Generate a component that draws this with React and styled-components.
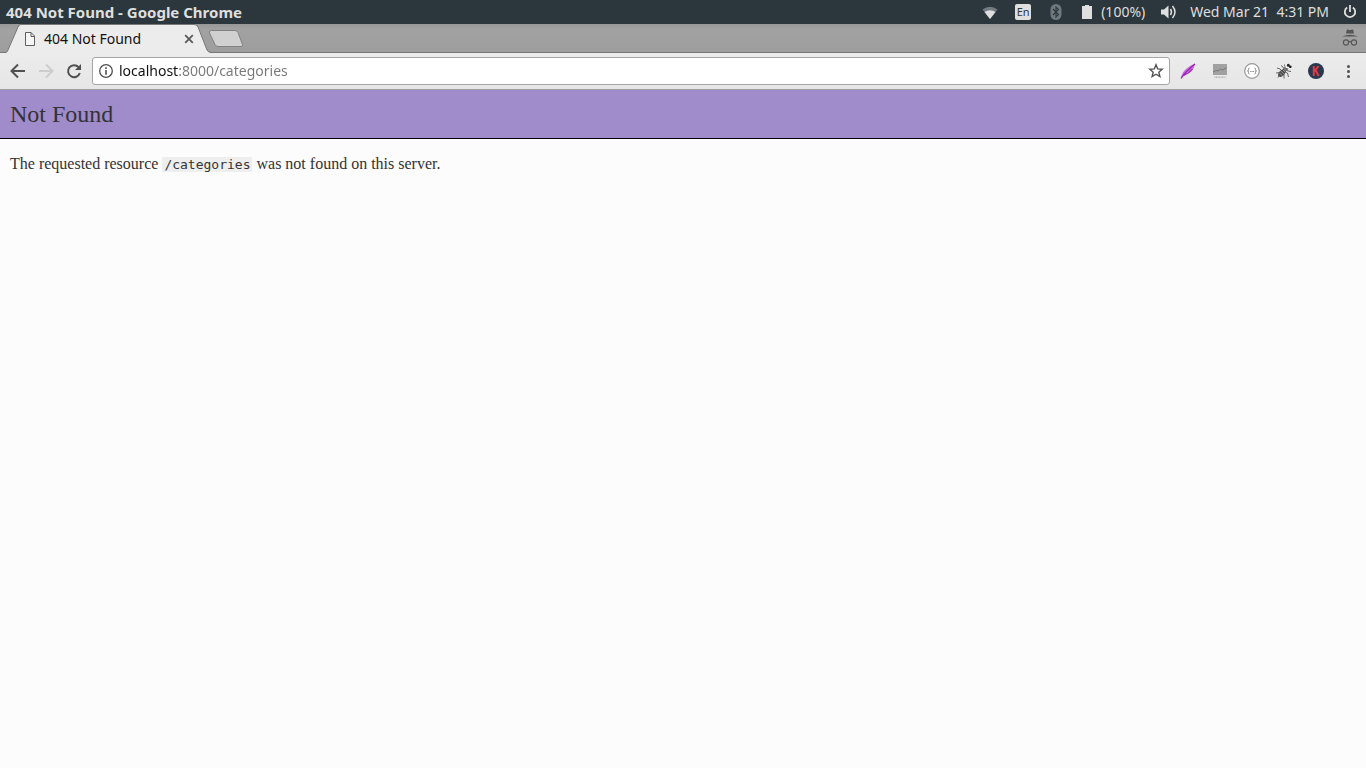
import React from "react";
import styled, { createGlobalStyle } from "styled-components";

const extensions = [
  { label: "Feather", icon: FeatherIcon },
  { label: "Analytics", icon: AnalyticsIcon },
  { label: "JSON", icon: JsonIcon },
  { label: "Debugger", icon: BugIcon },
  { label: "K", icon: KIcon },
];

const App = () => {
  return (
    <Wrapper>
      <GlobalStyle />
      <SystemBar />
      <TabStrip>
        <Tab>
          <TabShape viewBox="0 0 208 29" preserveAspectRatio="none">
            <path d="M0 29 C3 29 3 28 4 26 L14 3 Q15 .5 17 .5 H190 Q193 .5 194 3 L203 26 Q204 28.500 208 29 Z" fill="#ececec" />
            <path d="M0 28.500 C3 28.500 3 28 4 26 L14 3 Q15 .5 17 .5 H190 Q193 .5 194 3 L203 26 Q204 28.500 208 28.500" fill="none" stroke="#777" />
          </TabShape>
          <FileIcon />
          <TabTitle>404 Not Found</TabTitle>
          <TabClose aria-label="Close tab">
            <svg width="10" height="10" viewBox="0 0 10 10" stroke="#5a5a5a" strokeWidth="1.8">
              <path d="M1.200 1.200 8.800 8.800 M8.800 1.200 1.200 8.800" />
            </svg>
          </TabClose>
        </Tab>
        <NewTab aria-label="New tab">
          <svg width="36" height="18" viewBox="0 0 36 18">
            <path d="M3 1.500 H27 Q29 1.500 30 3.500 L34.500 15.500 Q35 17.500 33 17.500 H10 Q8 17.500 7 15.500 L1.500 4 Q.8 1.500 3 1.500Z" fill="#d0d0d0" stroke="#808080" />
          </svg>
        </NewTab>
        <IncognitoIcon />
      </TabStrip>
      <Toolbar />
      <Main>
        <PageHeader>
          <Title>Not Found</Title>
        </PageHeader>
        <Message>
          The requested resource <Code>/categories</Code> was not found on this server.
        </Message>
      </Main>
    </Wrapper>
  );
};

const SystemBar = () => (
  <Bar>
    <WindowTitle>404 Not Found - Google Chrome</WindowTitle>
    <Indicators>
      <StatusIcons>
        <svg width="16" height="16" viewBox="0 0 16 16">
          <path d="M.5 5.500 Q8 0 15.500 5.500 L8 15Z" fill="#727b7f" />
          <path d="M2.500 8 Q8 4.500 13.500 8 L8 15Z" fill="#dfdfdf" />
        </svg>
        <Language>En</Language>
        <svg width="16" height="16" viewBox="0 0 16 16">
          <rect x="2.500" y="0" width="11" height="16" rx="5.500" fill="#6f787c" />
          <path d="M5 5 10.500 10.500 8 13 V3 L10.500 5.500 5 11" fill="none" stroke="#2c373d" strokeWidth="1.100" />
        </svg>
        <Battery>
          <svg width="12" height="16" viewBox="0 0 12 16">
            <path d="M1 2 H4 V1 H8 V2 H11 V15 H1Z" fill="#dfdfdf" />
          </svg>
          <span>(100%)</span>
        </Battery>
      </StatusIcons>
      <svg width="16" height="16" viewBox="0 0 16 16">
        <path d="M1 5.500 H4 L8.500 1.500 V14.500 L4 10.500 H1Z" fill="#dfdfdf" />
        <path d="M10.500 5 Q12.500 8 10.500 11" fill="none" stroke="#dfdfdf" strokeWidth="1.500" />
        <path d="M12.500 2 Q17.500 8 12.500 14" fill="none" stroke="#dfdfdf" strokeWidth="1.500" />
      </svg>
      <Clock>Wed Mar 21{"  "}4:31 PM</Clock>
      <svg width="14" height="14" viewBox="0 0 14 14" fill="none" stroke="#dfdfdf" strokeWidth="1.800">
        <path d="M4.200 2.500 A5.200 5.200 0 1 0 9.800 2.500 M7 0 V7" />
      </svg>
    </Indicators>
  </Bar>
);

const Toolbar = () => (
  <ToolbarRow>
    <Nav>
      <NavButton aria-label="Back">
        <svg width="16" height="16" viewBox="0 0 16 16" fill="none" stroke="#505050" strokeWidth="2">
          <path d="M15 8 H2 M8 1.500 1.500 8 8 14.500" />
        </svg>
      </NavButton>
      <NavButton aria-label="Forward" disabled>
        <svg width="16" height="16" viewBox="0 0 16 16" fill="none" stroke="#cdcdcd" strokeWidth="2">
          <path d="M1 8 H14 M8 1.500 14.500 8 8 14.500" />
        </svg>
      </NavButton>
      <NavButton aria-label="Reload">
        <svg width="16" height="16" viewBox="0 0 16 16" fill="none" stroke="#505050" strokeWidth="2">
          <path d="M12.600 4.200 A6 6 0 1 0 13.800 10" />
          <path d="M15 1 V7 H9Z" fill="#505050" stroke="none" />
        </svg>
      </NavButton>
    </Nav>
    <Omnibox>
      <svg width="14" height="14" viewBox="0 0 14 14">
        <circle cx="7" cy="7" r="6.300" fill="none" stroke="#505050" strokeWidth="1.300" />
        <path d="M6.200 3.300 H7.800 V4.900 H6.200Z M6.200 6 H7.800 V10.800 H6.200Z" fill="#505050" />
      </svg>
      <Url aria-label="Address" defaultValue="localhost:8000/categories" spellCheck="false" />
      <StarButton aria-label="Bookmark this page">
        <svg width="16" height="16" viewBox="0 0 16 16">
          <path d="M8 1.700 9.700 5.900 14.200 6.200 10.800 9.200 11.900 13.600 8 11.200 4.100 13.600 5.200 9.200 1.800 6.200 6.300 5.900Z" fill="none" stroke="#505050" strokeWidth="1.400" />
        </svg>
      </StarButton>
    </Omnibox>
    <Extensions>
      {extensions.map(({ label, icon: Icon }) => (
        <NavButton aria-label={label} key={label}>
          <Icon />
        </NavButton>
      ))}
    </Extensions>
    <NavButton aria-label="Menu">
      <svg width="16" height="16" viewBox="0 0 16 16" fill="#505050">
        <circle cx="8.500" cy="3.500" r="1.500" />
        <circle cx="8.500" cy="8.500" r="1.500" />
        <circle cx="8.500" cy="13.500" r="1.500" />
      </svg>
    </NavButton>
  </ToolbarRow>
);

function FileIcon() {
  return (
    <svg width="12" height="14" viewBox="0 0 12 14" fill="#f6f6f6" stroke="#5f5f5f">
      <path d="M1.500 .5 H7 L10.500 4 V13.500 H1.500Z M7 .5 V4.500 H10.500" />
    </svg>
  );
}

function IncognitoIcon() {
  return (
    <svg width="18" height="18" viewBox="0 0 18 18">
      <path d="M5 4.500 5.800 .8 Q6.200 .3 7 .6 L9 1.200 11 .6 Q11.800 .3 12.200 .8 L13 4.500Z" fill="#555" />
      <path d="M1 7.500 Q9 4 17 7.500Z" fill="#555" />
      <g fill="none" stroke="#555" strokeWidth="1.100">
        <circle cx="5" cy="13.500" r="2.600" />
        <circle cx="13" cy="13.500" r="2.600" />
        <path d="M7.600 13.200 Q9 12 10.400 13.200" />
      </g>
    </svg>
  );
}

function FeatherIcon() {
  return (
    <svg width="16" height="16" viewBox="0 0 16 16">
      <path d="M1 15 Q1.500 10 6 6 Q10 2.500 15 .5 Q14.500 5 11.500 8 Q7 12 3 13Z" fill="#c76fda" />
      <path d="M1 15.500 Q6 8 15 1 M3.500 12.500 Q9 10.500 12.500 6" fill="none" stroke="#9a1cb5" strokeWidth="1.200" />
    </svg>
  );
}

function AnalyticsIcon() {
  return (
    <svg width="16" height="16" viewBox="0 0 16 16">
      <path d="M1 1 H15 V12 H1Z" fill="#a1a1a1" />
      <path d="M1 9 4 7.500 6 8 8.500 6 11 7 14.500 4.500" fill="none" stroke="#777" />
      <path d="M2.500 14.200 H13.500" stroke="#b4b4b4" strokeDasharray="1 .5" strokeWidth="1.500" />
    </svg>
  );
}

function JsonIcon() {
  return (
    <svg width="16" height="16" viewBox="0 0 16 16">
      <circle cx="8" cy="8" r="7.300" fill="#fff" stroke="#999" strokeWidth="1.200" />
      <path d="M5.500 5 Q4.300 5 4.500 6.500 Q4.700 8 3.500 8 Q4.700 8 4.500 9.500 Q4.300 11 5.500 11 M10.500 5 Q11.700 5 11.500 6.500 Q11.300 8 12.500 8 Q11.300 8 11.500 9.500 Q11.700 11 10.500 11" fill="none" stroke="#888" />
      <path d="M6.200 8.500 H10" stroke="#888" strokeDasharray="1 .4" />
    </svg>
  );
}

function BugIcon() {
  return (
    <svg width="16" height="16" viewBox="0 0 16 16">
      <path d="M1 5 4 6 6 8 M5 2.500 7 4 8 6 M0 10 4 9.500 M2 14.500 3.500 11.500 M8 15.500 8 11.500 M12.500 14 11.500 10 8.500 9 M15 8.500 12 8 9.500 7 M8.500 1.500 9.500 4.500" fill="none" stroke="#666" strokeWidth="1" />
      <ellipse cx="6" cy="10" rx="4.600" ry="2.700" transform="rotate(-45 6 10)" fill="#4c4c4c" />
      <path d="M3.300 9.700 6.300 12.700 M4.900 8.100 7.900 11.100 M6.500 6.500 9.500 9.500" stroke="#aaa" strokeWidth=".8" />
      <circle cx="10" cy="5.700" r="2.300" fill="#777" />
      <circle cx="11.500" cy="3" r="2.200" fill="#fff" />
      <circle cx="14" cy="4.500" r="1.600" fill="#fff" />
      <circle cx="12.300" cy="2.200" r="1.500" fill="#222" />
      <circle cx="14.300" cy="3.800" r="1.400" fill="#222" />
    </svg>
  );
}

function KIcon() {
  return (
    <svg width="16" height="16" viewBox="0 0 16 16">
      <circle cx="8" cy="8" r="8" fill="#293950" />
      <path d="M5.800 3 V13 M10.500 3 6.500 8.300 M7.500 7 10.700 13" fill="none" stroke="#e33b44" strokeWidth="2" />
    </svg>
  );
}

const GlobalStyle = createGlobalStyle`
  * {
    box-sizing: border-box;
  }
  body {
    margin: 0;
    background: #fcfcfc;
  }
  svg {
    display: block;
    flex: none;
  }
`;

const Wrapper = styled.div`
  display: flex;
  flex-direction: column;
  min-height: 100vh;
  font-family: "Noto Sans", sans-serif;
`;

const Bar = styled.header`
  display: flex;
  align-items: center;
  justify-content: space-between;
  height: 24px;
  padding: 0 9px 0 6px;
  background: #2c373d;
  color: #dfdfdf;
  font-size: 14px;
  line-height: 24px;
`;

const WindowTitle = styled.strong`
  font-size: 15px;
  font-weight: 700;
  line-height: 22px;
`;

const Indicators = styled.div`
  display: flex;
  align-items: center;
  gap: 14px;
`;

const StatusIcons = styled.div`
  display: flex;
  align-items: center;
  gap: 17px;
  margin-right: 1px;
`;

const Language = styled.span`
  width: 16px;
  height: 16px;
  border-radius: 2px;
  background: #dfdfdf;
  color: #2c373d;
  font-size: 11px;
  line-height: 16px;
  text-align: center;
`;

const Battery = styled.div`
  display: flex;
  align-items: center;
  gap: 8px;
`;

const Clock = styled.time`
  white-space: pre;
`;

const TabStrip = styled.div`
  display: flex;
  align-items: center;
  height: 29px;
  padding: 0 7px 0 4px;
  border-bottom: 1px solid #777;
  background: linear-gradient(#989898, #a2a2a2 6px, #9d9d9d);

  > svg {
    margin-left: auto;
  }
`;

const Tab = styled.div`
  position: relative;
  z-index: 1;
  display: flex;
  align-items: center;
  width: 208px;
  height: 29px;
  margin-bottom: -1px;
  padding: 0 18px 0 20px;
  gap: 8px;

  > svg {
    position: relative;
  }
`;

const TabShape = styled.svg`
  && {
    position: absolute;
    inset: 0;
    width: 100%;
    height: 100%;
  }
`;

const TabTitle = styled.span`
  position: relative;
  flex: 1;
  color: #111;
  font-size: 14px;
  line-height: 20px;
`;

const IconButton = styled.button`
  display: grid;
  place-items: center;
  flex: none;
  padding: 0;
  border: none;
  background: transparent;
  cursor: pointer;

  &:disabled {
    cursor: default;
  }
`;

const TabClose = styled(IconButton)`
  position: relative;
`;

const NewTab = styled(IconButton)`
  margin-left: -4px;
`;

const ToolbarRow = styled.div`
  display: flex;
  align-items: center;
  height: 37px;
  padding: 0 10px;
  border-bottom: 1px solid #a0a0a0;
  background: linear-gradient(#ececec, #e6e6e6);
`;

const Nav = styled.nav`
  display: flex;
  gap: 12px;
  margin-right: 10px;
`;

const NavButton = styled(IconButton)`
  width: 16px;
  height: 16px;
`;

const Omnibox = styled.div`
  display: flex;
  flex: 1;
  align-items: center;
  gap: 6px;
  height: 28px;
  padding: 0 5px 0 6px;
  border: 1px solid #a5a5a5;
  border-radius: 3px;
  background: #fff;
`;

/* the host is darker than the port and path */
const Url = styled.input`
  flex: 1;
  min-width: 0;
  height: 24px;
  padding: 0;
  border: none;
  outline: none;
  background: linear-gradient(to right, #111 59px, #777 59px);
  background-clip: text;
  color: #777;
  -webkit-text-fill-color: transparent;
  font: 14px/24px "Noto Sans", sans-serif;
`;

const StarButton = styled(IconButton)``;

const Extensions = styled.div`
  display: flex;
  gap: 16px;
  margin: 0 16px 0 10px;
`;

const Main = styled.main`
  flex: 1;
  background: #fcfcfc;
  color: #333;
  font-family: "Liberation Serif", serif;
`;

const PageHeader = styled.div`
  padding: 10px;
  border-bottom: 1px solid #000;
  background: #a08bcb;
`;

const Title = styled.h1`
  margin: 0;
  font-size: 24px;
  font-weight: 400;
  line-height: 28px;
`;

const Message = styled.p`
  margin: 16px 10px;
  font-size: 16px;
  line-height: 18px;
`;

const Code = styled.code`
  padding: 0 2px;
  background: #eee;
  font-family: "DejaVu Sans Mono", monospace;
  font-size: 13px;
`;

export default App;
